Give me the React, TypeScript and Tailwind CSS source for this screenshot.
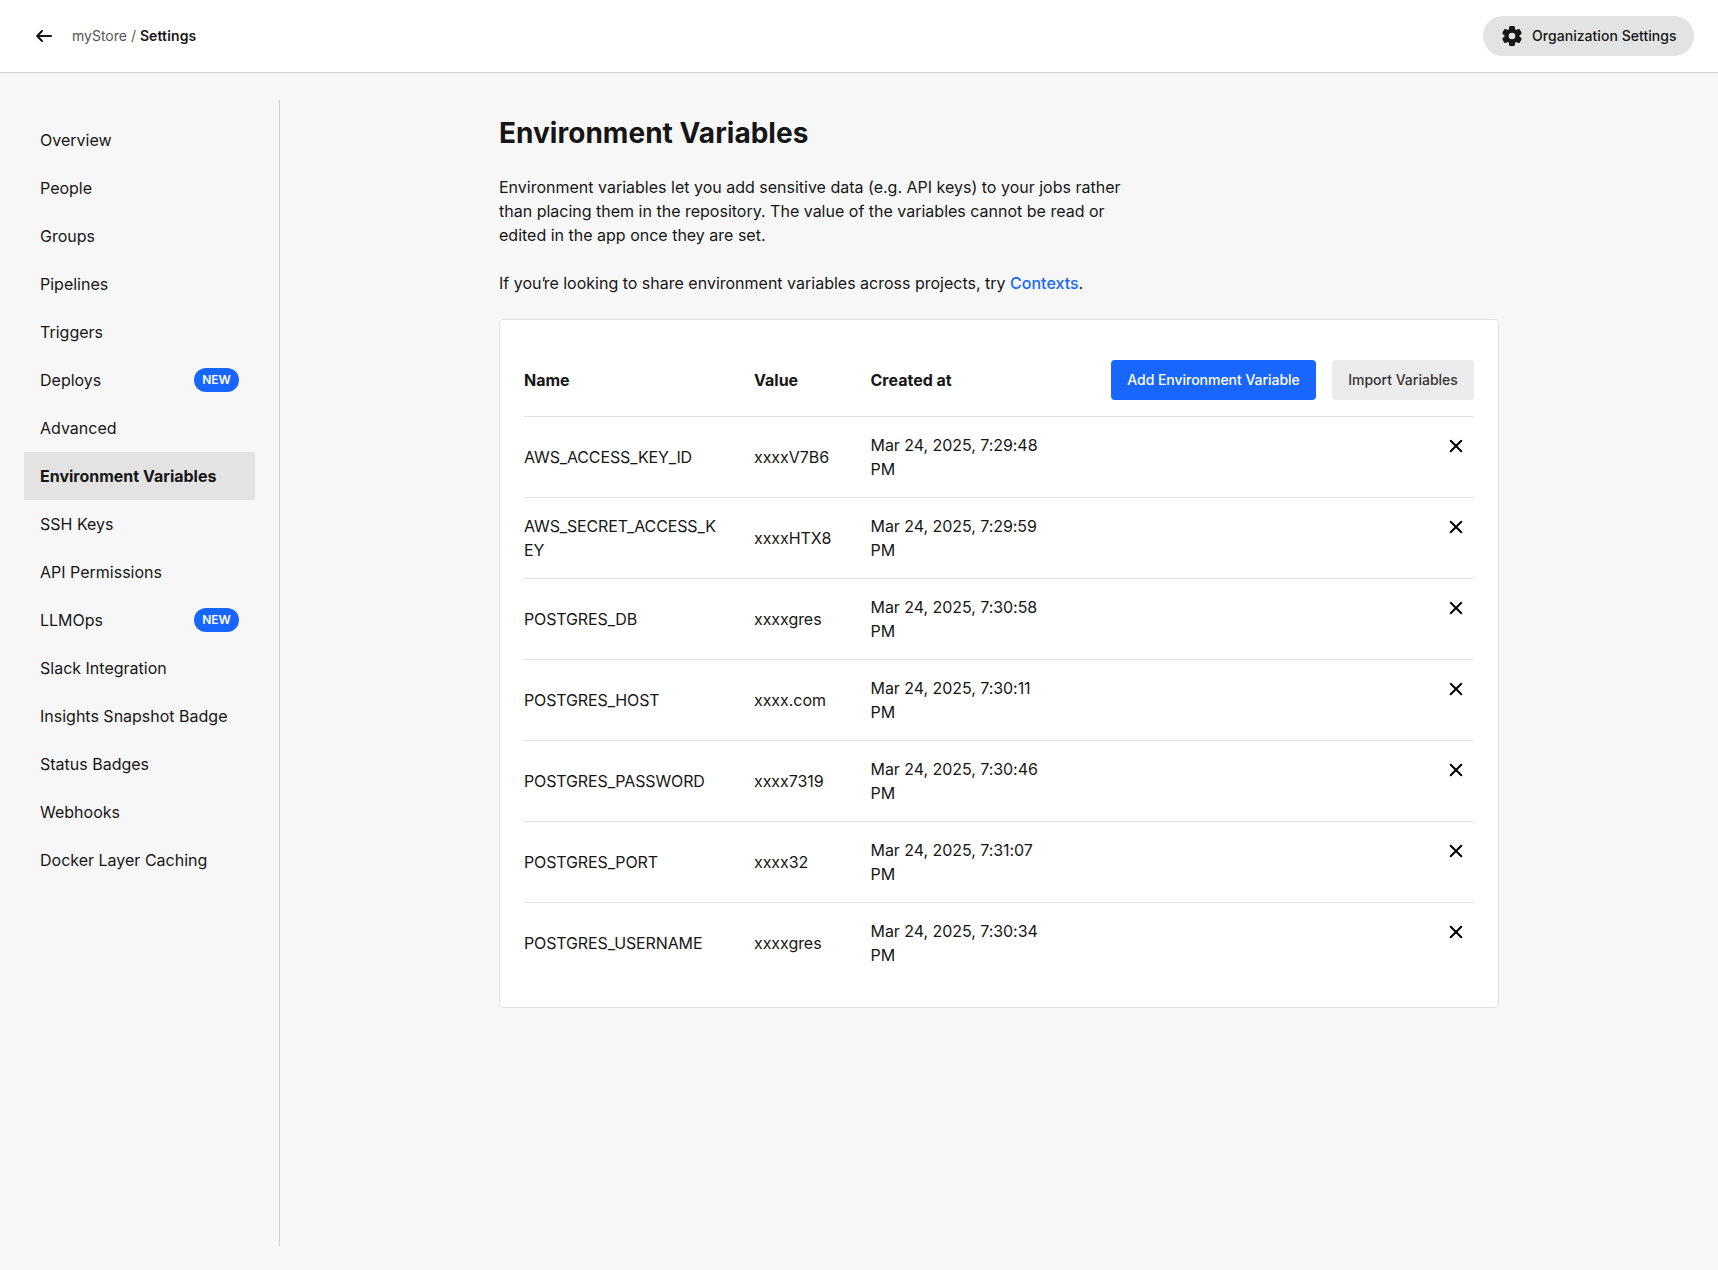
const navItems: { label: string; isNew?: boolean; active?: boolean }[] = [
  { label: "Overview" },
  { label: "People" },
  { label: "Groups" },
  { label: "Pipelines" },
  { label: "Triggers" },
  { label: "Deploys", isNew: true },
  { label: "Advanced" },
  { label: "Environment Variables", active: true },
  { label: "SSH Keys" },
  { label: "API Permissions" },
  { label: "LLMOps", isNew: true },
  { label: "Slack Integration" },
  { label: "Insights Snapshot Badge" },
  { label: "Status Badges" },
  { label: "Webhooks" },
  { label: "Docker Layer Caching" },
];

const variables = [
  { name: "AWS_ACCESS_KEY_ID", value: "xxxxV7B6", created: "Mar 24, 2025, 7:29:48 PM" },
  { name: "AWS_SECRET_ACCESS_KEY", value: "xxxxHTX8", created: "Mar 24, 2025, 7:29:59 PM" },
  { name: "POSTGRES_DB", value: "xxxxgres", created: "Mar 24, 2025, 7:30:58 PM" },
  { name: "POSTGRES_HOST", value: "xxxx.com", created: "Mar 24, 2025, 7:30:11 PM" },
  { name: "POSTGRES_PASSWORD", value: "xxxx7319", created: "Mar 24, 2025, 7:30:46 PM" },
  { name: "POSTGRES_PORT", value: "xxxx32", created: "Mar 24, 2025, 7:31:07 PM" },
  { name: "POSTGRES_USERNAME", value: "xxxxgres", created: "Mar 24, 2025, 7:30:34 PM" },
];

function ArrowLeft() {
  return (
    <svg width="16" height="12" viewBox="0 0 16 12" fill="none" stroke="#161616" strokeWidth="2">
      <path d="M1.5 6H15M6 1L1.2 6 6 11" strokeLinejoin="round" strokeLinecap="round" />
    </svg>
  );
}

function Gear() {
  return (
    <svg width="24" height="24" viewBox="0 0 24 24" fill="#161616">
      <circle cx="12" cy="12" r="7.6" />
      <rect x="9" y="2" width="6" height="20" rx="1.6" />
      <rect x="9" y="2" width="6" height="20" rx="1.6" transform="rotate(60 12 12)" />
      <rect x="9" y="2" width="6" height="20" rx="1.6" transform="rotate(120 12 12)" />
      <circle cx="12" cy="12" r="3.3" fill="#e3e3e3" />
    </svg>
  );
}

function Cross() {
  return (
    <svg width="14" height="14" viewBox="0 0 14 14" fill="none" stroke="#000" strokeWidth="2">
      <path d="M1.7 1.7l10.6 10.6M12.3 1.7L1.7 12.3" strokeLinecap="round" />
    </svg>
  );
}

export default function App() {
  return (
    <div className="flex h-[1270px] flex-col bg-[#f7f7f7] font-[Inter,sans-serif] text-base text-[#161616]">
      <header className="flex h-[73px] shrink-0 items-center justify-between border-b border-[#d0d0d0] bg-white pr-6 pl-9">
        <div className="flex items-center text-sm">
          <a href="#" aria-label="Back">
            <ArrowLeft />
          </a>
          <span className="ml-5 whitespace-pre text-[#555]">myStore / </span>
          <span className="font-semibold tracking-[0.12px]">Settings</span>
        </div>
        <button className="flex h-10 w-[211px] items-center rounded-full bg-[#e3e3e3] pl-[17px] text-sm font-medium whitespace-nowrap">
          <Gear />
          <span className="ml-2 tracking-[0.04px]">Organization Settings</span>
        </button>
      </header>
      <div className="flex min-h-0 flex-1 pt-[27px] pb-[24px]">
        <aside className="w-[280px] shrink-0 border-r border-[#d0d0d0] pt-4 pr-6 pl-6">
          <nav>
            {navItems.map((item) => (
              <a
                key={item.label}
                href="#"
                className={
                  item.active
                    ? "flex h-12 items-center bg-[#e3e3e3] px-4 font-bold"
                    : "flex h-12 items-center justify-between px-4"
                }
              >
                {item.label}
                {item.isNew && (
                  <span className="flex h-6 w-[45px] items-center justify-center rounded-full bg-[#1966ff] text-xs font-semibold text-white">
                    NEW
                  </span>
                )}
              </a>
            ))}
          </nav>
        </aside>
        <main className="mx-auto w-[1000px] pt-3">
          <h1 className="text-[28px] leading-[42px] font-bold tracking-[0.03px]">Environment Variables</h1>
          <p className="mt-[21px] w-[640px]">
            Environment variables let you add sensitive data (e.g. API keys) to your jobs rather than placing them in
            the repository. The value of the variables cannot be read or edited in the app once they are set.
          </p>
          <p className="mt-6">
            If you<span className="tracking-[-2px]">’</span>re looking to share environment variables across projects,
            try{" "}
            <a href="#" className="font-medium text-[#1966ff]">
              Contexts
            </a>
            .
          </p>
          <section className="mt-6 rounded border border-[#e3e3e3] bg-white p-6">
            <div className="flex h-[73px] items-center border-b border-[#e3e3e3] font-bold">
              <div className="w-[230px]">Name</div>
              <div className="w-[116.5px]">Value</div>
              <div className="flex-1">Created at</div>
              <div className="flex gap-4 text-sm font-medium">
                <button className="h-10 w-[205px] rounded bg-[#1966ff] tracking-[-0.03px] text-white">
                  Add Environment Variable
                </button>
                <button className="h-10 w-[142px] rounded bg-[#ececec] text-[#343434]">Import Variables</button>
              </div>
            </div>
            {variables.map((v) => (
              <div key={v.name} className="flex items-center border-b border-[#e3e3e3] py-4 last:border-b-0">
                <div className="w-[230px] pr-8 tracking-[-0.13px] break-all">{v.name}</div>
                <div className="w-[116.5px] tracking-[-0.05px]">{v.value}</div>
                <div className="w-[180px] tracking-[-0.05px]">{v.created}</div>
                <button aria-label="Delete" className="mt-[6px] mr-[11px] ml-auto self-start">
                  <Cross />
                </button>
              </div>
            ))}
          </section>
        </main>
      </div>
    </div>
  );
}
